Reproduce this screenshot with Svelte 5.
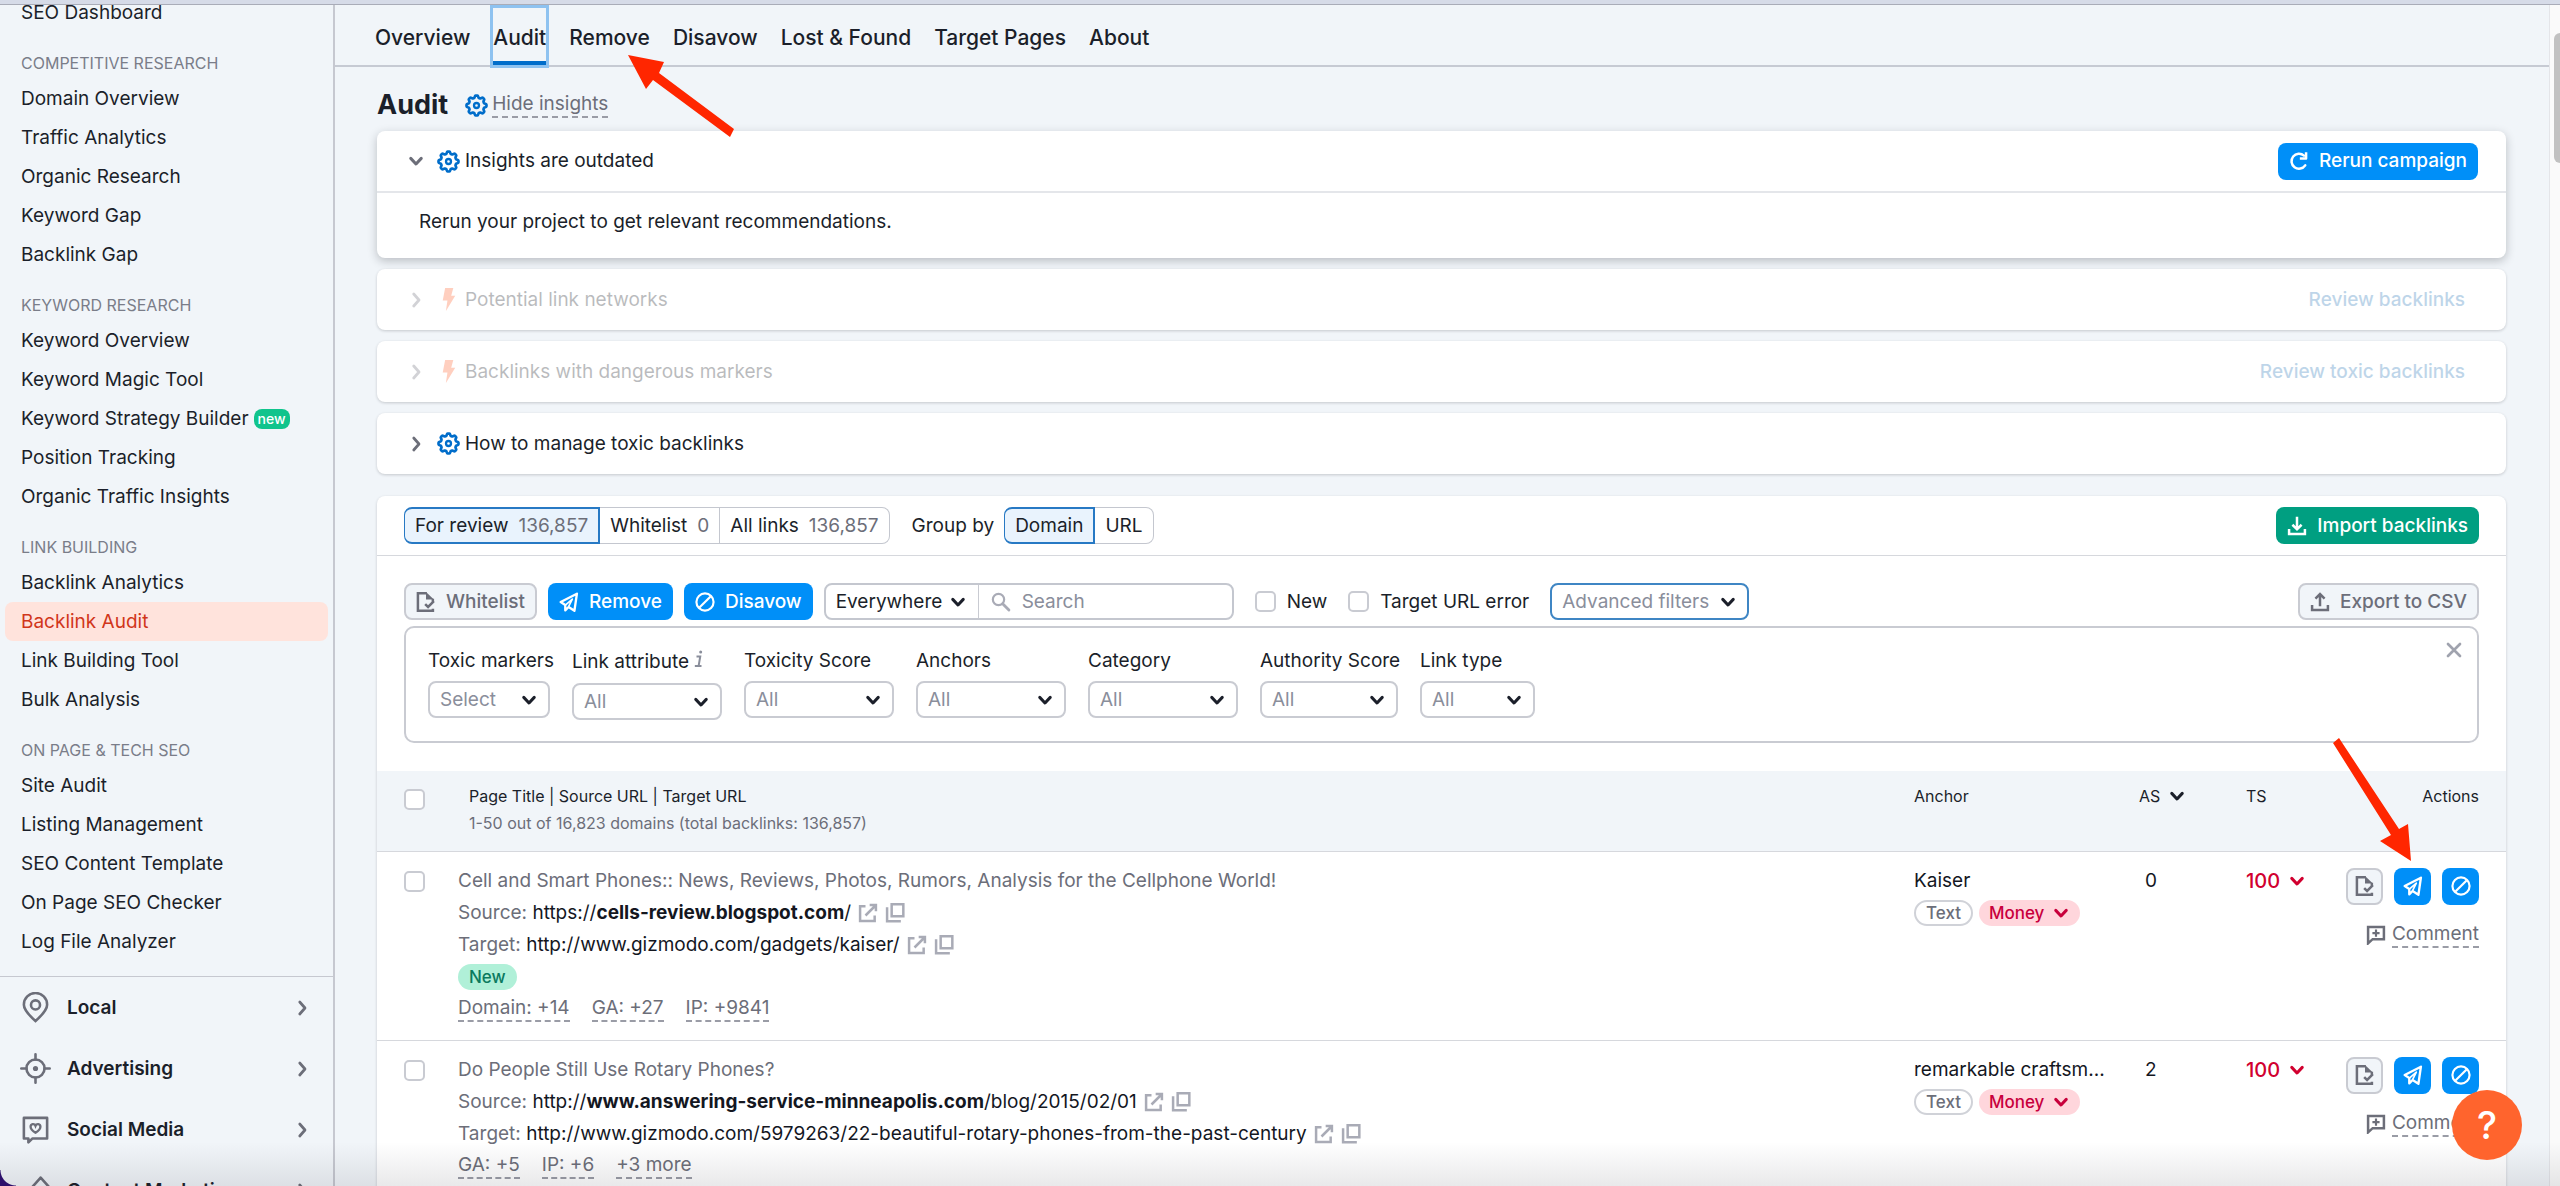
<script>
  const sections = [
    {
      title: 'Competitive research',
      items: ['Domain Overview', 'Traffic Analytics', 'Organic Research', 'Keyword Gap', 'Backlink Gap']
    },
    {
      title: 'Keyword research',
      items: ['Keyword Overview', 'Keyword Magic Tool', 'Keyword Strategy Builder', 'Position Tracking', 'Organic Traffic Insights']
    },
    {
      title: 'Link building',
      items: ['Backlink Analytics', 'Backlink Audit', 'Link Building Tool', 'Bulk Analysis']
    },
    {
      title: 'On page & tech SEO',
      items: ['Site Audit', 'Listing Management', 'SEO Content Template', 'On Page SEO Checker', 'Log File Analyzer']
    }
  ];
  const groups = [
    { name: 'Local', icon: 'pin' },
    { name: 'Advertising', icon: 'target' },
    { name: 'Social Media', icon: 'social' },
    { name: 'Content Marketing', icon: 'content' }
  ];
  const tabs = ['Overview', 'Audit', 'Remove', 'Disavow', 'Lost & Found', 'Target Pages', 'About'];

  const insights = [
    { title: 'Potential link networks', action: 'Review backlinks', icon: 'bolt', muted: true },
    { title: 'Backlinks with dangerous markers', action: 'Review toxic backlinks', icon: 'bolt', muted: true },
    { title: 'How to manage toxic backlinks', action: '', icon: 'gear', muted: false }
  ];

  const views = [
    { name: 'For review', count: '136,857' },
    { name: 'Whitelist', count: '0' },
    { name: 'All links', count: '136,857' }
  ];

  const filters = [
    { label: 'Toxic markers', value: 'Select', size: 'medium' },
    { label: 'Link attribute', value: 'All', size: 'wide', hint: true },
    { label: 'Toxicity Score', value: 'All', size: 'wide' },
    { label: 'Anchors', value: 'All', size: 'wide' },
    { label: 'Category', value: 'All', size: 'wide' },
    { label: 'Authority Score', value: 'All', size: 'broad' },
    { label: 'Link type', value: 'All', size: 'narrow' }
  ];

  const rows = [
    {
      title: 'Cell and Smart Phones:: News, Reviews, Photos, Rumors, Analysis for the Cellphone World!',
      source: ['https://', 'cells-review.blogspot.com', '/'],
      target: 'http://www.gizmodo.com/gadgets/kaiser/',
      isNew: true,
      stats: ['Domain: +14', 'GA: +27', 'IP: +9841'],
      anchor: 'Kaiser',
      as: 0,
      ts: 100
    },
    {
      title: 'Do People Still Use Rotary Phones?',
      source: ['http://', 'www.answering-service-minneapolis.com', '/blog/2015/02/01'],
      target: 'http://www.gizmodo.com/5979263/22-beautiful-rotary-phones-from-the-past-century',
      isNew: false,
      stats: ['GA: +5', 'IP: +6', '+3 more'],
      anchor: 'remarkable craftsm...',
      as: 2,
      ts: 100
    }
  ];

  // Outline of an eight-toothed cog around (12, 12).
  function cog() {
    const pts = [];
    for (let i = 0; i < 96; i++) {
      const a = (i / 96) * Math.PI * 2;
      const r = 9.3 + 1.2 * Math.tanh(1.8 * Math.cos(8 * a));
      pts.push(`${(12 + r * Math.sin(a)).toFixed(2)} ${(12 - r * Math.cos(a)).toFixed(2)}`);
    }
    return 'M' + pts.join('L') + 'Z';
  }
  const cogPath = cog();
</script>

{#snippet icon(name)}
  <svg class="icon i-{name}" viewBox="0 0 24 24" aria-hidden="true" fill="none" stroke="currentColor" stroke-width="2.6">
    {#if name === 'gear'}
      <path d={cogPath} stroke-width="2.8" /><circle cx="12" cy="12" r="2.6" stroke-width="2.4" />
    {:else if name === 'bolt'}
      <path d="M8.5 0h8.500l-2.200 8H19L9.300 24l1.600-11H6z" fill="currentColor" stroke="none" />
    {:else if name === 'down'}
      <path d="M5 8.5l7 7.500 7-7.500" stroke-width="4" stroke-linecap="round" stroke-linejoin="round" />
    {:else if name === 'right'}
      <path d="M9 4l7 8-7 8" stroke-width="3.6" stroke-linecap="round" stroke-linejoin="round" />
    {:else if name === 'refresh'}
      <path d="M19.5 17.2A9 9 0 1 1 18 5.5" stroke-width="3" stroke-linecap="round" />
      <path d="M20.5 1.5V9H13" stroke-width="3" stroke-linejoin="round" />
    {:else if name === 'download'}
      <path d="M2.5 15.5v6h19v-6M12 1v14M6.5 10.5L12 16l5.5-5.5" stroke-width="3" />
    {:else if name === 'upload'}
      <path d="M2.5 15.5v6h19v-6M12 17V3M6.5 8L12 2.5 17.500 8" stroke-width="3" />
    {:else if name === 'whitelist'}
      <path d="M13 1.500H2.300v21h18v-2.500" stroke-width="3" />
      <path d="M12 0l9.500 9H12z" fill="currentColor" stroke="none" />
      <path d="M20.200 8v3.500M11 14.500l3.500 3.500 7-7" stroke-width="3" />
    {:else if name === 'plane'}
      <path d="M21.500 2L2 12l5.500 3.500V22l4-4 7 4.500z" stroke-width="2.800" stroke-linejoin="round" />
      <path d="M8 15.500l8-7-4.500 9" stroke-width="2" stroke-linejoin="round" />
    {:else if name === 'ban'}
      <circle cx="12" cy="12" r="10.300" /><path d="M5 19L19 5" />
    {:else if name === 'search'}
      <circle cx="9" cy="9" r="6.800" /><path d="M14 14l7.500 7.500" stroke-width="3.400" stroke-linecap="round" />
    {:else if name === 'close'}
      <path d="M4 4l16 16M20 4L4 20" stroke-width="3.600" stroke-linecap="round" />
    {:else if name === 'info'}
      <path d="M9 9h4.500l-2 11.500M7 20.500h8" stroke-width="2.400" /><circle cx="14" cy="3.500" r="1.800" fill="currentColor" stroke="none" />
    {:else if name === 'external'}
      <path d="M9 4H2.500v17.500H20V15M14 2.500h7.500V10M21 3L9 15" stroke-width="3" />
    {:else if name === 'copy'}
      <path d="M8 1.500h14v14.500H8zM2.500 5v17H19" stroke-width="3" />
    {:else if name === 'comment'}
      <path d="M2.500 2.500h19v14.500H8l-5.500 5z" stroke-width="3" /><path d="M12 5.500v8.500M7.700 9.700h8.600" />
    {:else if name === 'pin'}
      <path d="M12 22.500C7 18 3 14 3 9.800a9 9 0 0 1 18 0C21 14 17 18 12 22.500z" stroke-width="2" /><circle cx="12" cy="10" r="3.500" stroke-width="2" />
    {:else if name === 'target'}
      <circle cx="12" cy="12" r="7" stroke-width="2" /><circle cx="12" cy="12" r="2" fill="currentColor" stroke="none" />
      <path d="M12 1v4M12 19v4M1 12h4M19 12h4" stroke-width="2" stroke-linecap="round" />
    {:else if name === 'social'}
      <path d="M3 3h18v16H9.500L6.500 22v-3H3z" stroke-width="2" stroke-linejoin="round" />
      <path d="M12 14.500c-2.500-1.500-3.800-3-3.800-4.600 0-2.400 3-2.700 3.800-.7.800-2 3.800-1.700 3.800.7 0 1.600-1.300 3.100-3.800 4.600z" stroke-width="1.800" />
    {:else if name === 'content'}
      <path d="M16 2l-8 9v11h16V11z" stroke-width="2" stroke-linejoin="round" />
    {/if}
  </svg>
{/snippet}

<div class="window">
  <div class="chrome-edge"></div>
  <div class="page">
    <aside class="sidebar">
      <nav class="tools" aria-label="SEO tools">
        <a class="tool" href="#seo-dashboard">SEO Dashboard</a>
        {#each sections as section}
          <h2>{section.title}</h2>
          {#each section.items as item}
            <a class="tool" class:current={item === 'Backlink Audit'} href="#tool">
              {item}{#if item === 'Keyword Strategy Builder'}<span class="fresh">new</span>{/if}
            </a>
          {/each}
        {/each}
      </nav>
      <nav class="groups" aria-label="Toolkits">
        {#each groups as group}
          <a class="group" href="#group">{@render icon(group.icon)}<span>{group.name}</span>{@render icon('right')}</a>
        {/each}
      </nav>
    </aside>

    <main>
      <nav class="tabs" aria-label="Backlink Audit">
        {#each tabs as tab}
          <a class:active={tab === 'Audit'} href="#tab">{tab}</a>
        {/each}
      </nav>

      <div class="content">
        <header class="heading">
          <h1>Audit</h1>
          {@render icon('gear')}
          <button class="dashed">Hide insights</button>
        </header>

        <div class="insights">
          <section class="card open">
            <div class="card-head">
              {@render icon('down')}{@render icon('gear')}
              <span class="card-title">Insights are outdated</span>
              <button class="btn blue">{@render icon('refresh')}Rerun campaign</button>
            </div>
            <p>Rerun your project to get relevant recommendations.</p>
          </section>
          {#each insights as insight}
            <section class="card">
              <div class="card-head" class:muted={insight.muted}>
                {@render icon('right')}{@render icon(insight.icon)}
                <span class="card-title">{insight.title}</span>
                {#if insight.action}<a class="review" href="#review">{insight.action}</a>{/if}
              </div>
            </section>
          {/each}
        </div>

        <section class="report">
          <div class="views">
            <div class="segments">
              {#each views as view, i}
                <button class:selected={i === 0}>{view.name}<span class="count">{view.count}</span></button>
              {/each}
            </div>
            <span class="group-label">Group by</span>
            <div class="segments">
              <button class="selected">Domain</button>
              <button>URL</button>
            </div>
            <button class="btn green push">{@render icon('download')}Import backlinks</button>
          </div>

          <div class="filters">
            <div class="bar">
              <button class="btn grey">{@render icon('whitelist')}Whitelist</button>
              <button class="btn blue">{@render icon('plane')}Remove</button>
              <button class="btn blue">{@render icon('ban')}Disavow</button>
              <div class="search-box">
                <div class="pick scope">
                  <select aria-label="Search in"><option>Everywhere</option></select>
                  {@render icon('down')}
                </div>
                <label class="query">{@render icon('search')}<input type="text" placeholder="Search" aria-label="Search" /></label>
              </div>
              <label class="check"><input type="checkbox" />New</label>
              <label class="check"><input type="checkbox" />Target URL error</label>
              <button class="btn advanced" aria-expanded="true">Advanced filters{@render icon('down')}</button>
              <button class="btn grey push">{@render icon('upload')}Export to CSV</button>
            </div>
            <div class="panel">
              {#each filters as filter, i}
                <div class="field {filter.size}">
                  <label for="filter-{i}">{filter.label}{#if filter.hint}{@render icon('info')}{/if}</label>
                  <div class="pick">
                    <select id="filter-{i}"><option>{filter.value}</option></select>
                    {@render icon('down')}
                  </div>
                </div>
              {/each}
              <button class="dismiss" aria-label="Close filters">{@render icon('close')}</button>
            </div>
          </div>

          <table>
            <thead>
              <tr>
                <th class="tick"><input type="checkbox" aria-label="Select all" /></th>
                <th class="page-col">
                  Page Title | Source URL | Target URL
                  <small>1-50 out of 16,823 domains (total backlinks: 136,857)</small>
                </th>
                <th class="anchor">Anchor</th>
                <th class="as"><span class="sort">AS {@render icon('down')}</span></th>
                <th class="ts">TS</th>
                <th class="actions">Actions</th>
              </tr>
            </thead>
            <tbody>
              {#each rows as row}
                <tr>
                  <td class="tick"><input type="checkbox" aria-label="Select {row.title}" /></td>
                  <td class="page-col">
                    <div class="line">{row.title}</div>
                    <div class="line">
                      Source:&nbsp;<a href="#source">{row.source[0]}<b>{row.source[1]}</b>{row.source[2]}</a>
                      {@render icon('external')}{@render icon('copy')}
                    </div>
                    <div class="line">
                      Target:&nbsp;<a href="#target">{row.target}</a>
                      {@render icon('external')}{@render icon('copy')}
                    </div>
                    {#if row.isNew}<div class="line"><span class="pill new">New</span></div>{/if}
                    <div class="line stats">
                      {#each row.stats as stat}<button class="dashed">{stat}</button>{/each}
                    </div>
                  </td>
                  <td class="anchor">
                    <div class="line dark">{row.anchor}</div>
                    <div class="line pills">
                      <span class="pill plain">Text</span>
                      <button class="pill money">Money{@render icon('down')}</button>
                    </div>
                  </td>
                  <td class="as"><div class="line dark">{row.as}</div></td>
                  <td class="ts"><button class="line score">{row.ts}{@render icon('down')}</button></td>
                  <td class="actions">
                    <div class="tools-row">
                      <button class="btn grey" aria-label="Whitelist">{@render icon('whitelist')}</button>
                      <button class="btn blue" aria-label="Remove">{@render icon('plane')}</button>
                      <button class="btn blue" aria-label="Disavow">{@render icon('ban')}</button>
                    </div>
                    <div class="note">{@render icon('comment')}<button class="dashed">Comment</button></div>
                  </td>
                </tr>
              {/each}
            </tbody>
          </table>
        </section>
      </div>
    </main>
    <div class="scroll-track"><div class="scroll-thumb"></div></div>
  </div>

  <div class="fade"></div>
  <button class="help" aria-label="Help">?</button>
  <div class="corner"></div>

  <svg class="pointer to-tab" viewBox="0 0 108 82" aria-hidden="true">
    <path d="M0 0L36 7 31 18 106 74 102 82 25 25 18 34z" />
  </svg>
  <svg class="pointer to-action" viewBox="0 0 82 124" aria-hidden="true">
    <path d="M0 5L6 0 66 91 75 86 78 123 47 103 58 97z" />
  </svg>
</div>

<style>
  :global(body) {
    margin: 0;
    background: #f1f5f9;
  }
  .window {
    position: relative;
    height: 100vh;
    overflow: hidden;
    display: flex;
    flex-direction: column;
    font: 19px/24px Inter, sans-serif;
    color: #1b1f2a;
    background: #f1f5f9;
  }
  * {
    box-sizing: border-box;
  }
  a {
    color: inherit;
    text-decoration: none;
  }
  button,
  select,
  input {
    font: inherit;
    color: inherit;
    margin: 0;
    padding: 0;
    border: 0;
    background: none;
  }
  .icon {
    width: 20px;
    height: 20px;
    flex: none;
  }
  .i-gear {
    width: 23px;
    height: 23px;
    color: #006dca;
  }
  .chrome-edge {
    flex: none;
    height: 5px;
    background: #d6dbe8;
    border-bottom: 1px solid #a9acb8;
  }
  .page {
    flex: 1;
    min-height: 0;
    display: flex;
  }

  /* Sidebar */
  .sidebar {
    flex: none;
    width: 335px;
    overflow: hidden;
    border-right: 2px solid #c6c8d0;
  }
  .tools {
    margin-top: -12px;
    padding: 0 5px 15px;
    border-bottom: 1px solid #c6c8d0;
  }
  .tool {
    display: flex;
    align-items: center;
    height: 39px;
    padding: 0 16px;
    border-radius: 8px;
  }
  .current {
    color: #d1361a;
    background: #ffe3dc;
  }
  .tools h2 {
    margin: 0;
    padding: 19px 16px 4px;
    font-size: 16px;
    font-weight: 400;
    text-transform: uppercase;
    color: #7a7d89;
  }
  .fresh {
    margin-left: 5px;
    padding: 0 4px;
    border-radius: 8px;
    font-size: 14px;
    line-height: 20px;
    font-weight: 500;
    color: #fff;
    background: #10c48c;
  }
  .group {
    display: flex;
    align-items: center;
    height: 61px;
    padding: 0 22px 0 20px;
    font-weight: 600;
  }
  .group .icon {
    width: 31px;
    height: 31px;
    color: #6c6e79;
  }
  .group span {
    flex: 1;
    padding-left: 16px;
  }
  .group .i-right {
    width: 18px;
    height: 18px;
  }

  /* Main column */
  main {
    flex: 1;
    min-width: 0;
  }
  .tabs {
    display: flex;
    gap: 23px;
    height: 62px;
    padding: 3px 40px 0;
    border-bottom: 2px solid #c6cad3;
    font-size: 21px;
    font-weight: 500;
  }
  .tabs a {
    display: flex;
    align-items: center;
    padding-top: 3px;
  }
  .tabs .active {
    border-bottom: 4px solid #006dca;
    padding-top: 7px;
    outline: 3px solid #8ec2f0;
  }
  .content {
    padding: 20px 43px 0 42px;
  }
  .heading {
    display: flex;
    align-items: center;
    height: 36px;
  }
  h1 {
    margin: 0 17px 0 0;
    font-size: 27px;
    line-height: 36px;
    font-weight: 700;
  }
  .dashed {
    line-height: 24px;
    color: #6c6e79;
    border-bottom: 2px dashed #9a9ca6;
  }
  .heading .dashed {
    margin-left: 4px;
  }
  .insights {
    display: grid;
    gap: 11px;
    padding: 8px 0 22px;
  }
  .card {
    border-radius: 8px;
    background: #fff;
    box-shadow: 0 1px 3px rgba(25, 27, 35, 0.2);
  }
  .card.open {
    box-shadow: 0 3px 10px rgba(25, 27, 35, 0.25);
  }
  .card-head {
    display: flex;
    align-items: center;
    height: 61px;
    padding: 0 28px 0 30px;
  }
  .open .card-head {
    height: 62px;
    border-bottom: 2px solid #e4e6ea;
  }
  .card-head > .i-right,
  .card-head > .i-down {
    width: 18px;
    height: 18px;
    margin-right: 12px;
    color: #6c6e79;
  }
  .card-head .i-bolt {
    width: 23px;
    height: 23px;
    color: #ff622d;
  }
  .card-title {
    flex: 1;
    padding-left: 5px;
  }
  .card p {
    margin: 0;
    padding: 17px 42px 24px;
  }
  .muted > * {
    opacity: 0.3;
  }
  .review {
    padding-right: 13px;
    font-weight: 500;
    color: #2a78b8;
  }

  .btn {
    display: flex;
    align-items: center;
    gap: 10px;
    height: 37px;
    padding: 0 11px;
    border-radius: 8px;
    font-weight: 500;
    white-space: nowrap;
  }
  .blue {
    color: #fff;
    background: #008ff8;
  }
  .green {
    color: #fff;
    background: #009f81;
  }
  .grey {
    color: #6c6e79;
    background: #f1f5f9;
    border: 2px solid #c9cbd2;
    padding: 0 10px;
  }
  .push {
    margin-left: auto;
  }

  /* Report card */
  .report {
    border-radius: 8px;
    background: #fff;
    box-shadow: 0 1px 3px rgba(25, 27, 35, 0.2);
  }
  .views {
    display: flex;
    align-items: center;
    height: 60px;
    padding: 0 27px;
    border-bottom: 1px solid #d6d8dd;
  }
  .segments {
    display: flex;
  }
  .segments button {
    height: 37px;
    padding: 0 10px;
    border: 1px solid #c4c7cf;
    border-left-width: 0;
  }
  .segments button:first-child {
    border-left-width: 1px;
    border-radius: 8px 0 0 8px;
  }
  .segments button:last-child {
    border-radius: 0 8px 8px 0;
  }
  .segments .selected {
    border: 2px solid #2779c4;
    background: #e9f3fd;
  }
  .count {
    padding-left: 10px;
    color: #6c6e79;
  }
  .group-label {
    padding: 0 10px 0 22px;
  }
  .filters {
    padding: 27px 27px 28px;
  }
  .bar {
    display: flex;
    align-items: center;
    gap: 11px;
    margin-bottom: 6px;
  }
  .search-box {
    display: flex;
    height: 37px;
    border: 2px solid #c4c7cf;
    border-radius: 8px;
  }
  .pick {
    display: grid;
    grid-template-columns: minmax(0, 1fr) auto;
    align-items: center;
  }
  .pick select {
    grid-area: 1 / 1 / 2 / 3;
    width: 100%;
    height: 37px;
    appearance: none;
    padding: 0 32px 0 10px;
    border: 2px solid #c9cbd2;
    border-radius: 8px;
    color: #8a8e9b;
  }
  .pick .icon {
    grid-area: 1 / 2;
    width: 18px;
    height: 18px;
    margin-right: 12px;
    pointer-events: none;
  }
  .scope {
    width: 153px;
  }
  .scope select {
    height: 33px;
    border-width: 0 1px 0 0;
    border-radius: 0;
    color: #1b1f2a;
  }
  .query {
    display: flex;
    align-items: center;
    gap: 11px;
    width: 253px;
    padding: 0 12px;
    color: #a9abb6;
  }
  .query input {
    flex: 1;
    min-width: 0;
    outline: 0;
  }
  .query input::placeholder {
    color: #8a8e9b;
    opacity: 1;
  }
  .check {
    display: flex;
    align-items: center;
    gap: 11px;
    margin-left: 10px;
  }
  input[type='checkbox'] {
    appearance: none;
    display: block;
    width: 21px;
    height: 21px;
    border: 2px solid #c9cbd2;
    border-radius: 5px;
    background: #fff;
  }
  .advanced {
    margin-left: 10px;
    font-weight: 400;
    color: #8a8e9b;
    border: 2px solid #3f86c4;
    padding: 0 10px;
  }
  .advanced .icon {
    width: 18px;
    height: 18px;
    color: #1b1f2a;
  }
  .panel {
    display: flex;
    align-items: flex-start;
    gap: 22px;
    padding: 21px 14px 21px 22px;
    border: 2px solid #c9cbd2;
    border-radius: 10px;
  }
  .field label {
    display: flex;
    align-items: center;
    min-height: 24px;
    margin-bottom: 8px;
    white-space: nowrap;
  }
  .field .i-info {
    height: 20px;
    margin-bottom: 6px;
    color: #8a8e9b;
  }
  .medium {
    width: 122px;
  }
  .wide {
    width: 150px;
  }
  .broad {
    width: 138px;
  }
  .narrow {
    width: 115px;
  }
  .dismiss {
    display: flex;
    margin-left: auto;
    margin-top: -8px;
    color: #a0a3ae;
  }
  .dismiss .icon {
    width: 18px;
    height: 18px;
  }

  /* Backlinks table */
  table {
    width: 100%;
    table-layout: fixed;
    border-collapse: collapse;
  }
  th,
  td {
    padding: 0;
    vertical-align: top;
    text-align: left;
    font-weight: 400;
  }
  thead tr {
    height: 80px;
    font-size: 16px;
    background: #f1f5f9;
    border-bottom: 1px solid #d6d8dd;
  }
  th {
    padding-top: 13px;
  }
  small {
    display: block;
    padding-top: 3px;
    font-size: 16px;
    color: #6c6e79;
  }
  tbody tr {
    height: 189px;
    border-bottom: 1px solid #d6d8dd;
  }
  td {
    padding-top: 13px;
  }
  .tick {
    width: 81px;
    padding: 19px 0 0 27px;
  }
  th.tick {
    padding-top: 18px;
  }
  th.page-col {
    padding-left: 11px;
  }
  .anchor {
    width: 225px;
  }
  .as {
    width: 107px;
  }
  td.as {
    padding-left: 6px;
  }
  .ts {
    width: 80px;
  }
  .actions {
    width: 180px;
    padding-right: 27px;
    text-align: right;
  }
  .sort {
    display: flex;
    align-items: center;
    gap: 8px;
  }
  .sort .icon {
    width: 18px;
    height: 18px;
  }
  .line {
    display: flex;
    align-items: center;
    height: 32px;
    white-space: nowrap;
    color: #6c6e79;
  }
  .dark,
  .line a {
    color: #14171f;
  }
  .line b {
    font-weight: 700;
  }
  .line .i-external,
  .line .i-copy {
    margin-left: 7px;
    color: #a9abb6;
  }
  .stats {
    gap: 22px;
  }
  .pill {
    display: flex;
    align-items: center;
    height: 26px;
    padding: 0 11px;
    border-radius: 13px;
    font-size: 17px;
    font-weight: 500;
  }
  .pills {
    gap: 6px;
  }
  .new {
    color: #0b7a5f;
    background: #b0f0d8;
  }
  .plain {
    border: 2px solid #d0d2d8;
    padding: 0 10px;
  }
  .money {
    gap: 8px;
    padding: 0 10px;
    color: #c8003c;
    background: #ffd6dc;
  }
  .score {
    gap: 8px;
    font-size: 20px;
    font-weight: 500;
    color: #d1002f;
  }
  .money .icon,
  .score .icon {
    width: 18px;
    height: 18px;
  }
  .tools-row {
    display: flex;
    justify-content: flex-end;
    gap: 11px;
    padding-top: 3px;
  }
  .tools-row .btn {
    justify-content: center;
    width: 37px;
    padding: 0;
  }
  .note {
    display: flex;
    align-items: center;
    justify-content: flex-end;
    gap: 6px;
    padding-top: 17px;
    color: #6c6e79;
  }

  .scroll-track {
    flex: none;
    display: flex;
    justify-content: flex-end;
    width: 11px;
    padding-top: 28px;
    border-left: 1px solid #e4e5e9;
    background: #fafafa;
  }
  .scroll-thumb {
    width: 6px;
    height: 130px;
    border-radius: 6px 0 0 6px;
    background: #c1c1c1;
  }

  /* Overlays */
  .fade {
    position: absolute;
    inset: auto 0 0;
    height: 44px;
    pointer-events: none;
    background: linear-gradient(rgba(40, 40, 50, 0), rgba(40, 40, 50, 0.1));
  }
  .help {
    position: absolute;
    right: 38px;
    bottom: 26px;
    width: 70px;
    height: 70px;
    border-radius: 50%;
    font-size: 38px;
    font-weight: 500;
    color: #fff;
    background: #ff642d;
  }
  .corner {
    position: absolute;
    left: 0;
    bottom: 0;
    width: 16px;
    height: 16px;
    background: radial-gradient(circle at 16px 0, transparent 15px, #2c0f6b 16px);
  }
  .pointer {
    position: absolute;
    pointer-events: none;
    fill: #ff2600;
  }
  .to-tab {
    left: 628px;
    top: 55px;
    width: 108px;
    height: 82px;
  }
  .to-action {
    right: 145px;
    top: 738px;
    width: 82px;
    height: 124px;
  }
</style>
